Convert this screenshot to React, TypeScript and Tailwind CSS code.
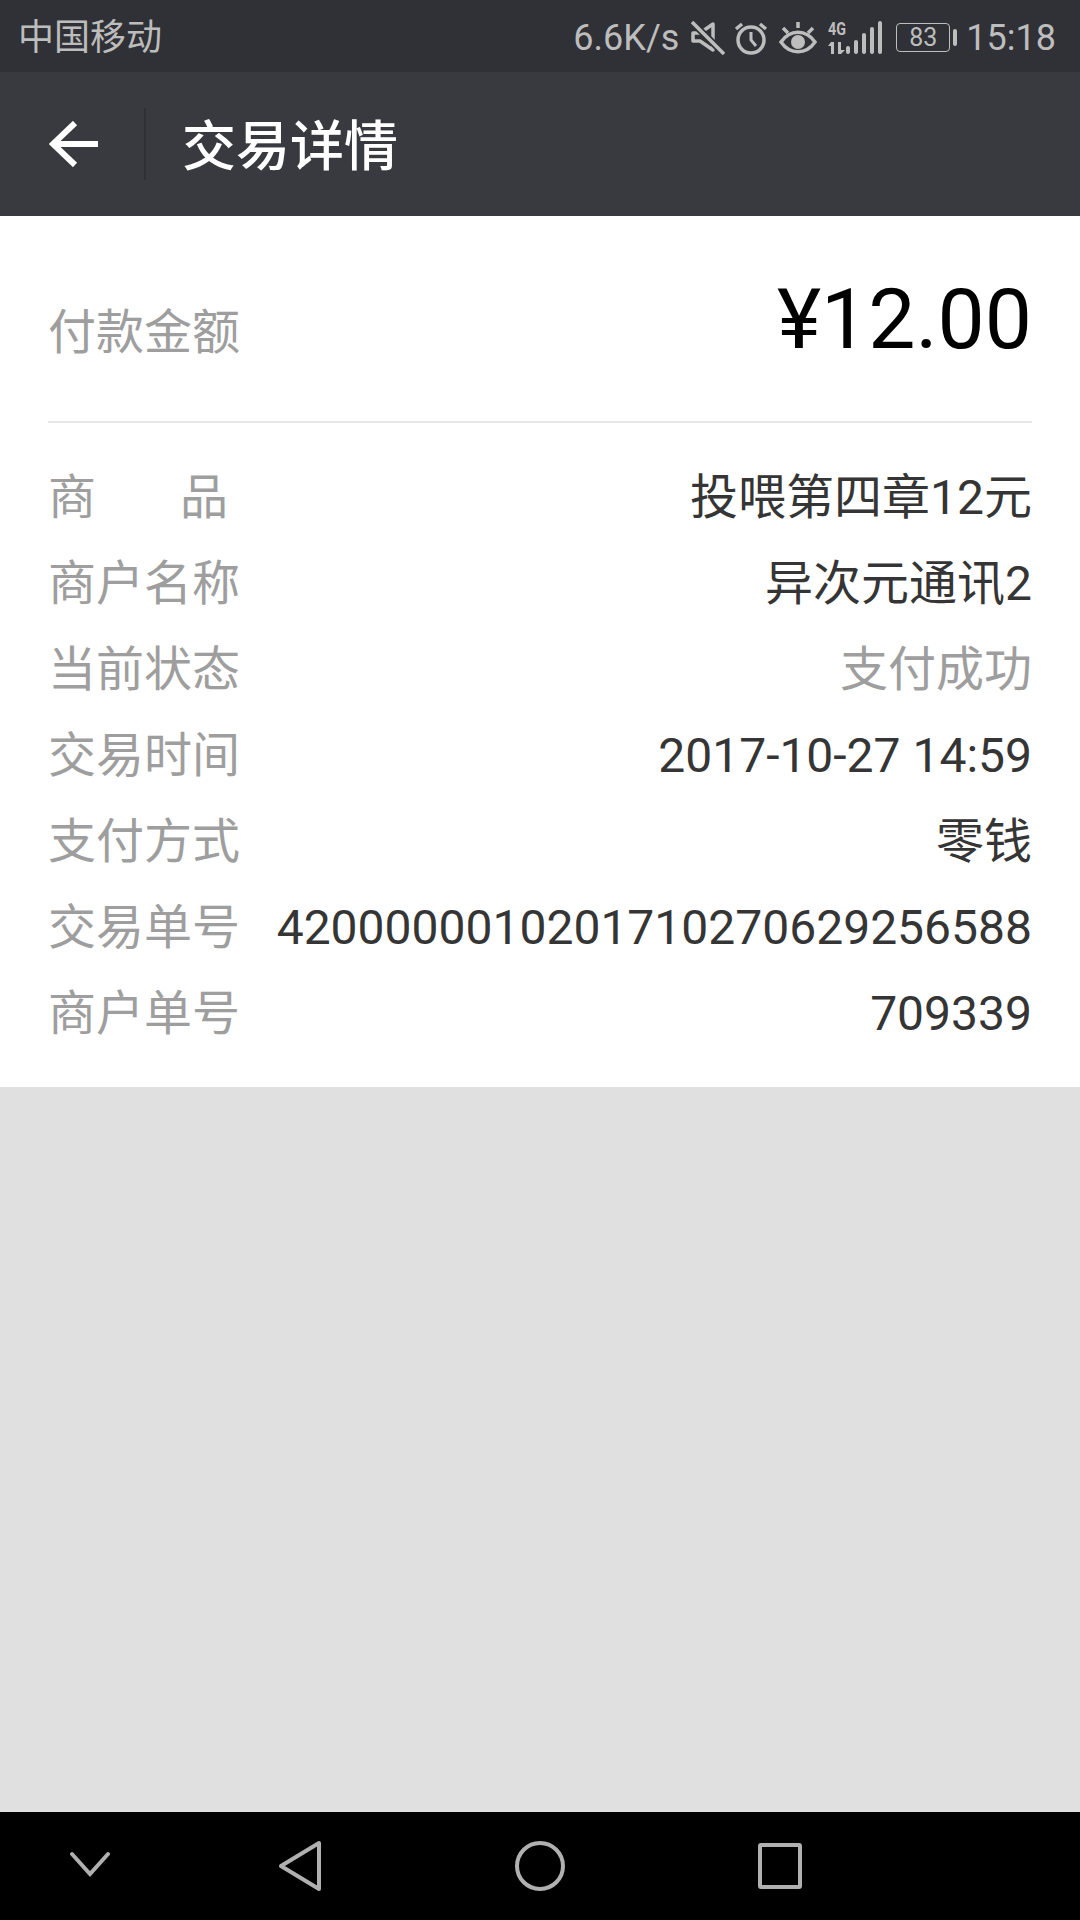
const DETAILS = [
  { label: "商户名称", value: "异次元通讯2" },
  { label: "当前状态", value: "支付成功", muted: true },
  { label: "交易时间", value: "2017-10-27 14:59" },
  { label: "支付方式", value: "零钱" },
  { label: "交易单号", value: "4200000010201710270629256588" },
  { label: "商户单号", value: "709339" },
];

const FONT = "font-['Roboto','Noto_Sans_CJK_SC',sans-serif]";

function StatusIcons() {
  return (
    <div className="flex items-center">
      <svg width="34" height="34" viewBox="0 0 34 34" fill="none" stroke="#bdbdbd" strokeWidth="3.5" className="ml-[12px]">
        <path d="M2 12h7l13-9v26l-13-9H2z" strokeLinejoin="round" />
        <path d="M1 1l32 32" stroke="#303136" strokeWidth="7" />
        <path d="M1 1l32 32" />
      </svg>
      <svg width="34" height="34" viewBox="0 0 34 34" fill="none" stroke="#bdbdbd" strokeWidth="3.5" className="ml-[9px]">
        <circle cx="17" cy="19" r="13" />
        <path d="M17 11v8l5 6" strokeWidth="3" />
        <path d="M2 8l6-5M32 8l-6-5" />
      </svg>
      <svg width="38" height="34" viewBox="0 0 38 34" fill="none" stroke="#bdbdbd" strokeWidth="3.5" className="ml-[11px]">
        <path d="M2 21c9-13 25-13 34 0c-9 13-25 13-34 0z" />
        <circle cx="19" cy="21" r="7" fill="#bdbdbd" stroke="none" />
        <path d="M19 1v6M4 7l5 5M34 7l-5 5" />
      </svg>
      <svg width="54" height="34" viewBox="0 0 54 34" fill="#bdbdbd" className="ml-[11px] overflow-visible">
        <text x="0" y="14" fontSize="18" fontWeight="700" fontFamily="Roboto" textLength="18" lengthAdjust="spacingAndGlyphs">4G</text>
        <path d="M3 21h3v12H3zM0 25l3-4v4zM10 21h3v8h4l-4 4h-3z" />
        <rect x="18" y="25" width="4" height="8" rx="2" />
        <rect x="26" y="19" width="4" height="14" rx="2" />
        <rect x="34" y="12" width="4" height="21" rx="2" />
        <rect x="42" y="6" width="4" height="27" rx="2" />
        <rect x="50" y="0" width="4" height="33" rx="2" />
      </svg>
      <div className="ml-[14px] flex items-center">
        <div className="flex h-[29px] w-[54px] items-center justify-center rounded-[4px] border border-[#bdbdbd] text-[25px] leading-none">
          83
        </div>
        <div className="ml-[3px] h-[17px] w-[4px] rounded-[2px] bg-[#bdbdbd]" />
      </div>
    </div>
  );
}

function StatusBar() {
  return (
    <div className={`flex h-[72px] items-center justify-between bg-[#303136] pl-[18px] pr-[24px] pt-[3px] text-[#bdbdbd] ${FONT}`}>
      <span className="text-[36px] leading-none">中国移动</span>
      <div className="flex items-center text-[36px] leading-none">
        <span>6.6K/s</span>
        <StatusIcons />
        <span className="ml-[9px]">15:18</span>
      </div>
    </div>
  );
}

function Header() {
  return (
    <div className={`flex h-[144px] items-center bg-[#393a3f] ${FONT}`}>
      <div className="flex w-[144px] justify-center">
        <svg width="50" height="46" viewBox="0 0 50 46" fill="none" stroke="#ffffff" strokeWidth="6" className="ml-[3px]">
          <path d="M49 23H5M26 2L4 23l22 21" />
        </svg>
      </div>
      <div className="h-[72px] w-[2px] bg-[#2f3035]" />
      <h1 className="ml-[36px] mt-[8px] text-[54px] font-medium leading-none text-white">交易详情</h1>
    </div>
  );
}

function Row({ label, value, muted }: { label: string; value: string; muted?: boolean }) {
  return (
    <div className="flex h-[86px] items-center justify-between">
      <span className="text-[#9e9e9e]">{label}</span>
      <span className={muted ? "text-[#9e9e9e]" : "text-[#353535]"}>{value}</span>
    </div>
  );
}

function NavBar() {
  return (
    <div className="flex h-[108px] items-center bg-black">
      <div className="flex w-[180px] justify-center">
        <svg width="40" height="26" viewBox="0 0 40 26" fill="none" stroke="#b0b0b0" strokeWidth="4" strokeLinecap="round" className="mt-[-4px]">
          <path d="M2 3l18 20L38 3" />
        </svg>
      </div>
      <div className="flex w-[240px] justify-center">
        <svg width="44" height="52" viewBox="0 0 44 52" fill="none" stroke="#b0b0b0" strokeWidth="4" strokeLinejoin="round" className="mr-[1px]">
          <path d="M41 3v46L3 26z" />
        </svg>
      </div>
      <div className="flex w-[240px] justify-center">
        <div className="h-[50px] w-[50px] rounded-full border-[4px] border-[#b0b0b0]" />
      </div>
      <div className="flex w-[240px] justify-center">
        <div className="h-[46px] w-[44px] rounded-[3px] border-[4px] border-[#b0b0b0]" />
      </div>
    </div>
  );
}

export default function App() {
  return (
    <div className={`flex h-[1920px] w-[1080px] flex-col bg-[#e0e0e0] ${FONT}`}>
      <StatusBar />
      <Header />
      <main className="h-[871px] bg-white px-[48px] text-[48px] leading-none">
        <div className="flex h-[207px] items-center justify-between border-b-2 border-[#e6e6e6]">
          <span className="mt-[28px] text-[#9e9e9e]">付款金额</span>
          <span className="mt-[3px] text-[84px] text-black">¥12.00</span>
        </div>
        <div className="pt-[32px]">
          <div className="flex h-[86px] items-center justify-between">
            <span className="flex w-[180px] justify-between text-[#9e9e9e]">
              <span>商</span>
              <span>品</span>
            </span>
            <span className="text-[#353535]">投喂第四章12元</span>
          </div>
          {DETAILS.map((d) => (
            <Row key={d.label} label={d.label} value={d.value} muted={d.muted} />
          ))}
        </div>
      </main>
      <div className="flex-1" />
      <NavBar />
    </div>
  );
}
